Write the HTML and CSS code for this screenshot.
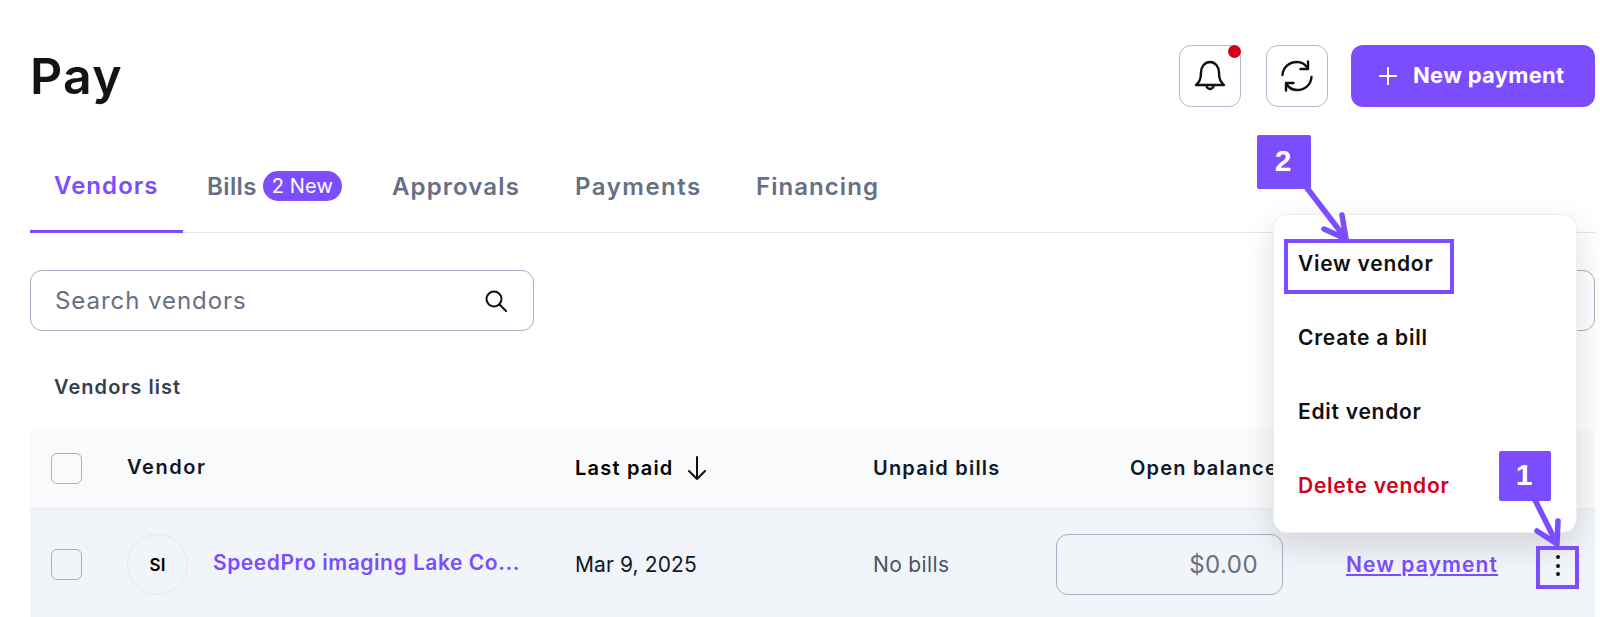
FILE: index.html
```html
<!DOCTYPE html>
<html lang="en">
<head>
<meta charset="utf-8">
<title>Pay</title>
<link rel="stylesheet" href="styles.css">
</head>
<body>
<div class="page">
  <header class="topbar">
    <h1 class="title">Pay</h1>
    <div class="actions">
      <button class="icon-btn has-dot" aria-label="Notifications">
        <svg width="32" height="32" viewBox="0 0 32 32" fill="none" stroke="#101010" stroke-width="2.4" stroke-linejoin="round" stroke-linecap="round"><path d="M2 25C5 22 7 20 7 12.500C7 6.500 11 2 16 2C21 2 25 6.500 25 12.500C25 20 27 22 30 25Z"/><path d="M12.500 25.500a3.500 3.500 0 0 0 7 0"/></svg>
      </button>
      <button class="icon-btn" aria-label="Refresh">
        <svg width="32" height="32" viewBox="0 0 32 32" fill="none" stroke="#101010" stroke-width="2.4" stroke-linejoin="round" stroke-linecap="round"><path d="M1.500 15C2 7.500 8 2 16 2C20.500 2 24 4 26.500 8"/><path d="M27 1.500V9H19.500"/><path d="M30.500 17C30 24.500 24 30 16 30C11.500 30 8 28 5.500 24"/><path d="M5 30.500V23H12.500"/></svg>
      </button>
      <button class="primary-btn">
        <svg width="20" height="20" viewBox="0 0 20 20" fill="none" stroke="#fff" stroke-width="2"><path d="M10 1V19M1 10H19"/></svg>
        <span class="primary-label">New payment</span>
      </button>
    </div>
  </header>

  <nav class="tabs">
    <a class="tab tab-active">Vendors</a>
    <a class="tab tab-bills">Bills <span class="badge">2 New</span></a>
    <a class="tab tab-approvals">Approvals</a>
    <a class="tab tab-payments">Payments</a>
    <a class="tab">Financing</a>
  </nav>

  <div class="toolbar">
    <div class="search">
      <span class="search-text">Search vendors</span>
      <svg width="22" height="22" viewBox="0 0 22 22" fill="none" stroke="#101010" stroke-width="2" stroke-linecap="round"><circle cx="9" cy="9" r="7.500"/><path d="M14.500 14.500L21 21"/></svg>
    </div>
    <div class="filter-box"></div>
  </div>

  <div class="list-title">Vendors list</div>

  <div class="table">
    <div class="row row-head">
      <div class="cell cell-check"><span class="checkbox"></span></div>
      <div class="cell cell-label cell-vendor">Vendor</div>
      <div class="cell cell-label cell-strong">Last paid
        <svg class="sort" width="20" height="24" viewBox="0 0 20 24" fill="none" stroke="#101010" stroke-width="2" stroke-linecap="round" stroke-linejoin="round"><path d="M10 1V23M2 15L10 23L18 15"/></svg>
      </div>
      <div class="cell cell-label">Unpaid bills</div>
      <div class="cell cell-label cell-balance">Open balance</div>
      <div class="cell"></div>
    </div>
    <div class="row row-body">
      <div class="cell cell-check"><span class="checkbox"></span></div>
      <div class="cell vendor-cell">
        <span class="avatar">SI</span>
        <a class="vendor-name">SpeedPro imaging Lake Co...</a>
      </div>
      <div class="cell date">Mar 9, 2025</div>
      <div class="cell muted">No bills</div>
      <div class="cell"><div class="amount">$0.00</div></div>
      <div class="cell cell-actions">
        <a class="pay-link">New payment</a>
        <span class="kebab"><i></i><i></i><i></i></span>
      </div>
    </div>
  </div>
</div>

<div class="menu">
  <div class="menu-item">View vendor</div>
  <div class="menu-item">Create a bill</div>
  <div class="menu-item">Edit vendor</div>
  <div class="menu-item menu-danger">Delete vendor</div>
</div>

<svg class="arrows" width="1600" height="617" viewBox="0 0 1600 617" fill="none" stroke="#7c4dff" stroke-width="5.500" stroke-linecap="round" stroke-linejoin="round">
  <path d="M1307 188L1346 239M1342 215L1346 239L1324 229"/>
  <path d="M1535 500L1557 544M1558 521L1557 544L1537 531"/>
</svg>
<div class="mark mark-view"></div>
<div class="mark mark-kebab"></div>
<div class="step step-two">2</div>
<div class="step step-one">1</div>
</body>
</html>
```
FILE: styles.css
```css
* { box-sizing: border-box; }
html, body { margin: 0; height: 617px; overflow: hidden; background: #fff; }
body { font-family: Inter, "Liberation Sans", sans-serif; color: #101828; position: relative; }
.page { padding: 45px 5px 0 30px; }

.topbar { display: flex; justify-content: space-between; align-items: center; height: 62px; }
.title { margin: 0; font-size: 50px; font-weight: 600; color: #141414; letter-spacing: 1.3px; line-height: 62px; }
.actions { display: flex; align-items: center; }
.icon-btn { width: 62px; height: 62px; margin-right: 25px; border: 1px solid #b3b9cc; border-radius: 12px; background: #fff; display: flex; align-items: center; justify-content: center; padding: 0; position: relative; }
.has-dot::after { content: ""; position: absolute; top: -1px; right: -1px; width: 13px; height: 13px; background: #d0021b; border-radius: 50%; }
.icon-btn + .primary-btn { margin-left: -2px; }
.primary-btn { width: 244px; height: 62px; border: 0; border-radius: 12px; background: #7c4dff; color: #fff; display: flex; align-items: center; gap: 15px; padding: 0 0 0 27px; font: 700 22px Inter, "Liberation Sans", sans-serif; letter-spacing: 0.3px; }
.primary-label { padding-bottom: 2px; }

.tabs { display: grid; grid-template-columns: 153px 185px 183px 181px 170px; align-items: end; height: 126px; border-bottom: 1px solid #e4e7ec; }
.tab { font-size: 24px; font-weight: 600; color: #667085; height: 92px; padding: 0 0 2px 24px; display: flex; align-items: center; gap: 3px; letter-spacing: 1.05px; white-space: nowrap; margin-bottom: -1px; }
.tab-active { color: #7c4dff; border-bottom: 3px solid #7c4dff; padding-bottom: 0; }
.tab-bills { letter-spacing: 0.4px; gap: 6px; }
.tab-approvals { letter-spacing: 1.15px; }
.tab-payments { letter-spacing: 1.5px; }
.badge { width: 79px; height: 30px; background: #7c4dff; color: #fff; border-radius: 15px; font-size: 20px; font-weight: 400; letter-spacing: 0.1px; display: flex; align-items: center; justify-content: center; }

.toolbar { display: flex; justify-content: space-between; margin-top: 37px; height: 61px; }
.search { width: 504px; border: 1px solid #a9b0c6; border-radius: 12px; display: flex; align-items: center; justify-content: space-between; padding: 0 26px 0 24px; }
.search-text { font-size: 24px; color: #667085; letter-spacing: 0.95px; }
.filter-box { width: 100px; border: 1px solid #a9b0c6; border-radius: 12px; }

.list-title { height: 98px; padding-top: 41px; padding-left: 24px; font-size: 20px; font-weight: 600; color: #344054; letter-spacing: 1.05px; line-height: 30px; }

.table { display: block; }
.row { display: grid; grid-template-columns: 97px 448px 298px 183px 227px 1fr; align-items: center; }
.row-head { height: 80px; background: #f9fafb; border-bottom: 1px solid #eaecf0; font-size: 20px; font-weight: 600; letter-spacing: 1.2px; }
.row-body { height: 111px; background: #f1f4f8; }
.cell { display: flex; align-items: center; white-space: nowrap; }
.cell-label { padding-bottom: 2px; }
.cell-vendor { letter-spacing: 1.6px; padding-bottom: 3px; }
.cell-check { padding-left: 21px; }
.checkbox { width: 31px; height: 31px; border: 1px solid #a9b0c6; border-radius: 6px; background: transparent; }
.cell-strong { color: #000; gap: 13px; }
.sort { flex: none; }
.cell-balance { padding-left: 74px; }
.vendor-cell { gap: 25px; }
.avatar { width: 61px; height: 61px; flex: none; border: 1px solid #e4e7ec; border-radius: 50%; display: flex; align-items: center; justify-content: center; font-size: 17px; font-weight: 600; color: #000; }
.vendor-name { font-size: 21px; font-weight: 600; color: #7c4dff; letter-spacing: 0.55px; padding-bottom: 4px; }
.date { font-size: 21px; color: #101828; letter-spacing: 0.1px; }
.muted { font-size: 21px; color: #475467; letter-spacing: 0.35px; }
.amount { width: 227px; height: 61px; border: 1px solid #a9b0c6; border-radius: 12px; display: flex; align-items: center; justify-content: flex-end; padding-right: 24px; font-size: 24px; color: #667085; letter-spacing: 0.45px; }
.cell-actions { padding-left: 63px; justify-content: space-between; padding-right: 19px; }
.pay-link { font-size: 21px; font-weight: 600; color: #7c4dff; text-decoration: underline; letter-spacing: 1.1px; }
.kebab { width: 36px; height: 36px; padding-top: 2px; display: flex; flex-direction: column; align-items: center; justify-content: center; gap: 4.500px; }
.kebab i { width: 4px; height: 4px; background: #101010; border-radius: 50%; }

.menu { position: absolute; left: 1273px; top: 214px; width: 304px; height: 319px; padding-top: 12px; background: #fff; border: 1px solid #eceef3; border-radius: 14px; box-shadow: 0 12px 32px rgba(16, 24, 40, 0.14); }
.menu-item { height: 74px; padding-left: 24px; display: flex; align-items: center; font-size: 21px; font-weight: 600; color: #101010; letter-spacing: 0.75px; padding-bottom: 2px; }
.menu-danger { color: #d0021b; }

.arrows { position: absolute; left: 0; top: 0; }
.mark { position: absolute; border: 4px solid #7c4dff; }
.mark-view { left: 1284px; top: 239px; width: 170px; height: 55px; }
.mark-kebab { left: 1536px; top: 546px; width: 43px; height: 43px; }
.step { position: absolute; background: #7c4dff; color: #fff; border-radius: 2px; display: flex; align-items: center; justify-content: center; padding: 0 2px 2px 0; font: 700 30px "Liberation Sans", Arial, sans-serif; }
.step-two { left: 1257px; top: 135px; width: 54px; height: 54px; }
.step-one { left: 1499px; top: 451px; width: 52px; height: 50px; }
```
